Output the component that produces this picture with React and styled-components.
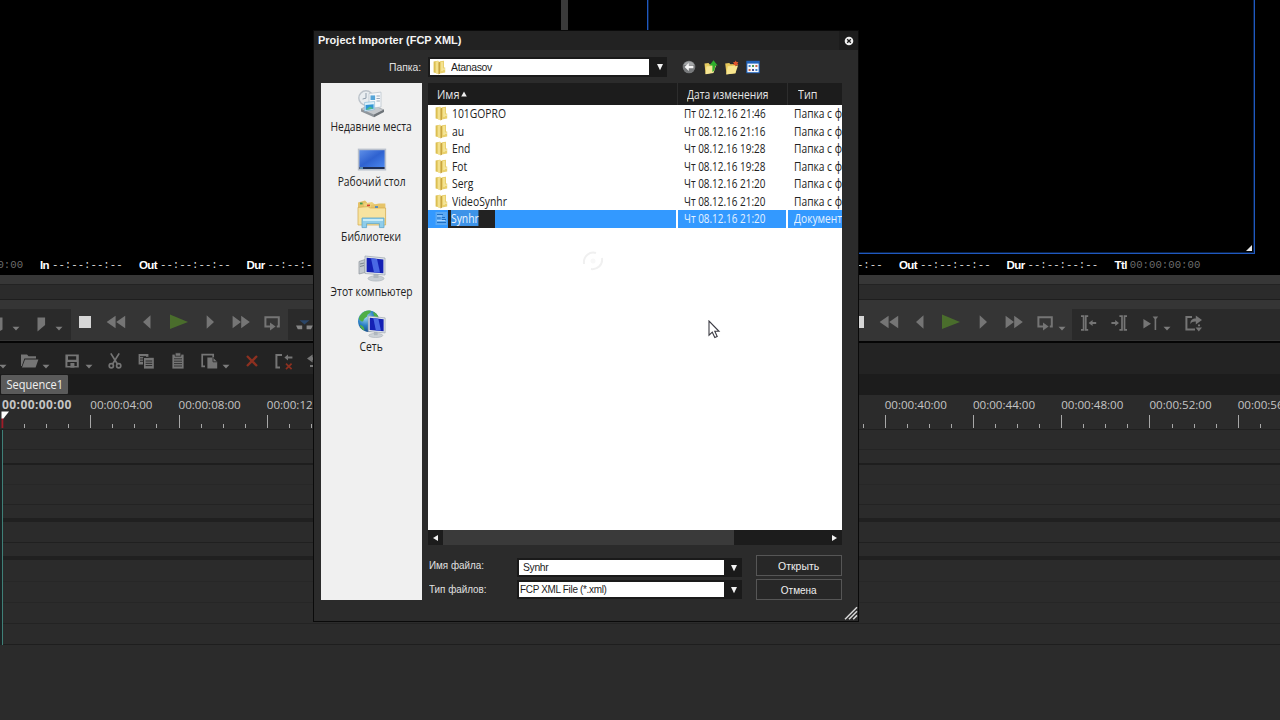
import React from "react";
import styled, { createGlobalStyle } from "styled-components";

const GlobalStyle = createGlobalStyle`
    * {
        box-sizing: border-box;
    }
    body {
        margin: 0;
        background: #2b2b2b;
        overflow: hidden;
    }
    svg {
        display: block;
        flex-shrink: 0;
    }
`;

const files = [
    { name: "101GOPRO", date: "Пт 02.12.16 21:46" },
    { name: "au", date: "Чт 08.12.16 21:16" },
    { name: "End", date: "Чт 08.12.16 19:28" },
    { name: "Fot", date: "Чт 08.12.16 19:28" },
    { name: "Serg", date: "Чт 08.12.16 21:20" },
    { name: "VideoSynhr", date: "Чт 08.12.16 21:20" },
];

// height of each track and thickness / colour of the line below it
const tracks = [
    [19, 1, "#242424"],
    [13, 2, "#1e1e1e"],
    [19, 1, "#272727"],
    [19, 1, "#232323"],
    [13, 4, "#202020"],
    [20, 1, "#202020"],
    [13, 4, "#202020"],
    [21, 1, "#272727"],
    [20, 1, "#262626"],
    [20, 1, "#232323"],
    [20, 1, "#1e1e1e"],
];

const marks = Array.from({ length: 15 }, (_, i) => {
    const s = String(i * 4).padStart(2, "0");
    return `00:00:${s}:00`;
});

/* ---------- icons ---------- */

const Caret = () => (
    <svg width="8" height="20" viewBox="0 0 8 20">
        <path d="M0.5 13.8h7L4 17.6z" fill="#7c7c7c" />
    </svg>
);

const Glyph = ({ children, width = 20 }) => (
    <svg width={width} height="20" viewBox={`0 0 ${width} 20`} fill="#757575">
        {children}
    </svg>
);

const Stop = () => (
    <Glyph>
        <path d="M4 4h12v12H4z" fill="#d6d6d6" />
    </Glyph>
);
const Rewind = () => (
    <Glyph>
        <path d="M9.6 3.8v12.4L.6 10zM19.2 3.8v12.4L10.2 10z" />
    </Glyph>
);
const Prev = () => (
    <Glyph>
        <path d="M13.5 3.3v13.4L6 10z" />
    </Glyph>
);
const Play = () => (
    <Glyph>
        <path d="M1 2.5v14.6L19 10z" fill="#4a6d2c" />
    </Glyph>
);
const Next = () => (
    <Glyph>
        <path d="M6.7 3.3v13.4L14 10z" />
    </Glyph>
);
const Forward = () => (
    <Glyph>
        <path d="M1.6 3.8v12.4L10 10zM10.2 3.8v12.4L18.8 10z" />
    </Glyph>
);
const Loop = () => (
    <Glyph>
        <path d="M8 14.4H3.4V5.2h13.4v9.2h-2" fill="none" stroke="#757575" strokeWidth="2" />
        <path d="M8 10.6v8l5.6-4z" />
    </Glyph>
);
const Marker = () => (
    <Glyph>
        <path d="M6.5 4.4h7.6v7.6l-7.6 6.4z" />
    </Glyph>
);
const Sync = () => (
    <Glyph>
        <path d="M5.5 7.2h10l-5 4.4z" fill="#2b4668" />
        <path d="M2 12.6h6.2v3.6H3.8zM12.6 12.6h6.2l-1.8 3.6h-4.4z" fill="#858585" />
    </Glyph>
);
const SetIn = () => (
    <Glyph>
        <path d="M2 3.2h2.6v13.6H2M9.2 3.2H6.8v13.6h2.4" fill="none" stroke="#757575" strokeWidth="1.7" />
        <path d="M9.6 10l4-3v2h3.6v2h-3.6v2z" />
    </Glyph>
);
const SetOut = () => (
    <Glyph>
        <path d="M10.4 3.2h2.6v13.6h-2.6M18 3.2h-2.5v13.6H18" fill="none" stroke="#757575" strokeWidth="1.7" />
        <path d="M10 10L6.2 7v2H2.4v2h3.8v2z" />
    </Glyph>
);
const NextEdit = () => (
    <Glyph>
        <path d="M2.4 6v9.6l7.6-4.8zM11.6 3.6h5.6L15.2 6v11h-1.6V6z" />
    </Glyph>
);
const Export = () => (
    <Glyph>
        <path d="M9 3.9H3.4v12.6H12" fill="none" stroke="#757575" strokeWidth="2" />
        <path d="M7.4 11c0-4 2-5.4 5.4-5.4V2.4L19 7l-6.2 4.4V8.6c-2.6-.2-4 .6-5.4 2.4zM12.6 14.5H19l-3.2 4zM15 11.4h2v1.8h-2z" />
    </Glyph>
);
const FolderOpen = () => (
    <Glyph>
        <path d="M1 3.4h6l1.6 1.8H16v2.2H4.4L1.8 15H1z" />
        <path d="M5 8.6h13.4l-2.8 8H2z" />
    </Glyph>
);
const Save = () => (
    <Glyph>
        <path fillRule="evenodd" d="M3.4 3.4h13.4v13.2H3.4zM6 5.2v3.6h8.2V5.2zM5.4 11v4h9.4v-4z" />
        <path d="M8.4 12h4v4.6h-4z" />
    </Glyph>
);
const Cut = () => (
    <Glyph>
        <g fill="none" stroke="#757575" strokeWidth="1.7">
            <path d="M5.8 2.4L12.4 13M14.2 2.4L7.6 13" />
            <circle cx="6.3" cy="14.8" r="2.1" />
            <circle cx="13.7" cy="14.8" r="2.1" />
        </g>
    </Glyph>
);
const Copy = () => (
    <Glyph>
        <path d="M2.6 3h9.8v3H8v7.4H2.6z" />
        <path d="M8 6.8h9.8v10.8H8z" />
        <path d="M4 5.6h6M4 8h3M4 10.3h3M9.6 10h6.6M9.6 12.3h6.6M9.6 14.6h6.6" stroke="#2a2a2a" />
        <path d="M7.5 17V6.3h5" stroke="#242424" fill="none" />
    </Glyph>
);
const Paste = () => (
    <Glyph>
        <path d="M4.4 3.6h11.2v14H4.4z" />
        <path d="M7.2 1.8h5.6v3.4H7.2z" stroke="#242424" strokeWidth=".8" />
        <path d="M6 7.8h8M6 10.2h8M6 12.6h8M6 15h8" stroke="#333" />
    </Glyph>
);
const PasteTo = () => (
    <Glyph>
        <path d="M6 15.4H3.2V3.6h11v2.8" fill="none" stroke="#757575" strokeWidth="1.7" />
        <path d="M8.4 6.6h5.4l4.4 4.2v6.8H8.4z" />
        <path d="M14 6.6v4.2h4" fill="none" stroke="#333" />
    </Glyph>
);
const Remove = () => (
    <Glyph>
        <path d="M5 5l10 10M15 5L5 15" stroke="#8c3020" strokeWidth="2.3" />
    </Glyph>
);
const RippleDelete = () => (
    <Glyph width="22">
        <path d="M10 4H4.4v12.4H8" fill="none" stroke="#757575" strokeWidth="2" />
        <path d="M12.4 6.4l3.6-3v2h4.4v2H16v2z" />
        <path d="M14 12.6l5.6 5.6M19.6 12.6L14 18.2" stroke="#8c3020" strokeWidth="1.7" />
    </Glyph>
);
const Undo = () => (
    <Glyph>
        <path d="M2 7.6l5.6-4v2.6h6V9h-6v2.6z" />
        <path d="M5 14h9v2H5z" />
    </Glyph>
);

const FolderIcon = () => (
    <svg width="13" height="15" viewBox="0 0 13 15">
        <path d="M.6 1.6L5 .8v12.6L.6 12.4z" fill="#dcbf52" />
        <path d="M2.6 1.4L6 .8v12.6l-2 .6-1.4-1z" fill="#f3e08c" />
        <path d="M5.4 2.4L7 1.4v12.4l-1.6.8z" fill="#c9a540" />
        <path d="M7 1.2l4-.4v6.6h1.2v5L7 13.6z" fill="#e9d06c" />
        <path d="M8 2h2v9H8z" fill="#f4e290" />
        <path d="M9.6 8.6H12v1H9.6z" fill="#f9f0c0" />
    </svg>
);

const XmlIcon = () => (
    <svg width="13" height="15" viewBox="0 0 13 15">
        <path d="M.5 1H12v13H.5z" fill="#5aa9f4" />
        <path d="M2 3.5h6M2 7h3.5M2 11.5h9M7 6.5h3M7 8.5h4" stroke="#1f6fc4" />
        <path d="M2 5h5M2 9.5h8" stroke="#a8d4ff" />
    </svg>
);

const RecentIcon = () => (
    <svg width="30" height="30" viewBox="0 0 30 30">
        <path d="M4 20l10-5 13 6-10 6.5z" fill="#c4c8cc" stroke="#92979c" strokeWidth=".6" />
        <path d="M4 20l13 5.5v2.8L4 22.4z" fill="#8f959b" />
        <path d="M17 25.5l10-5V23l-10 5.3z" fill="#6e7479" />
        <circle cx="9" cy="9" r="7.2" fill="#e9edf0" stroke="#bcc3ca" strokeWidth="1.4" />
        <path d="M9 4v5.2L5.6 10" fill="none" stroke="#8f9dab" />
        <path d="M12 4.5l12-1.4V18l-12 1.5z" fill="#f6f8fa" stroke="#b6c0c8" strokeWidth=".7" />
        <path d="M19.5 7h3.4M19.5 9.5h3.4M19.5 12h3.4" stroke="#98a9ba" />
        <path d="M13.5 6.4h4.6V11h-4.6z" fill="#56a5d8" />
        <path d="M7.6 13.5l10-1v8l-10 1.7z" fill="#dff1fb" stroke="#7fb3d3" strokeWidth=".6" />
        <path d="M8.6 16l8-.8v4.6l-8 1.3z" fill="#2f96d6" />
        <path d="M9 20.5l4-3 3.6 2L9 21z" fill="#51bb8a" />
    </svg>
);

const DesktopIcon = () => (
    <svg width="30" height="30" viewBox="0 0 30 30">
        <defs>
            <linearGradient id="desk" x1="0" y1="0" x2="1" y2="1">
                <stop offset="0" stopColor="#5e8fe8" />
                <stop offset=".5" stopColor="#2f62d0" />
                <stop offset="1" stopColor="#4a86ee" />
            </linearGradient>
        </defs>
        <path d="M.8 4.6h28.4v21.9H.8z" fill="#b9c0cc" />
        <path d="M2.4 6.2h25.2V23H2.4z" fill="url(#desk)" />
        <path d="M2.4 23h25.2v2H2.4z" fill="#1d2e55" />
        <path d="M3 23.3h3v1.4H3z" fill="#78b4d8" />
    </svg>
);

const LibraryIcon = () => (
    <svg width="32" height="30" viewBox="0 0 32 30">
        <path d="M2 3.4l7-1.8 2 2v22H2z" fill="#e4c268" />
        <path d="M8 4.4L16 3l3 2.4v20H8z" fill="#edd17c" />
        <path d="M15 6l8-1.6h6.4V24H15z" fill="#e6c46a" />
        <path d="M2 8.4l10-.8L14 9h15.6v17H2z" fill="#f7e3a0" stroke="#d3a94c" strokeWidth=".7" />
        <path d="M4 3.6h2.6v1.8H4z" fill="#3d9a50" />
        <path d="M11 5.6h3v1.6h-3z" fill="#d6402f" />
        <path d="M19 7.2h3v1.6h-3z" fill="#3a83cf" />
        <path d="M6 19h22v9.6h-4.6v-4H10.6v4H6z" fill="#8fcdea" stroke="#5ba5cc" strokeWidth=".8" />
        <path d="M7 20h20v2H7z" fill="#c8ecf8" />
    </svg>
);

const ScreenShape = ({ x, y, w, h }) => (
    <g>
        <path d={`M${x} ${y}l${w} 2v${h}l${-w} -1.5z`} fill="#dfe4e8" stroke="#9aa4ad" strokeWidth=".7" />
        <path d={`M${x + 1.6} ${y + 1.8}l${w - 3.2} 1.7v${h - 3.2}l${3.2 - w} -1.4z`} fill="#1420b4" />
        <path d={`M${x + w * 0.3} ${y + 2.2}l${w * 0.3} .8l${w * 0.15} ${h - 3.6}h${-w * 0.3}z`} fill="#4968e4" />
    </g>
);

const ComputerIcon = () => (
    <svg width="32" height="30" viewBox="0 0 32 30">
        <path d="M3 7.5l6-2v13L3 20z" fill="#c3c9ce" stroke="#8c949b" strokeWidth=".7" />
        <path d="M4 10l4-1M4 12.5l4-1" stroke="#7d868e" />
        <ellipse cx="20" cy="24.5" rx="8" ry="2.6" fill="#c8ced3" stroke="#a3abb2" strokeWidth=".6" />
        <path d="M17.5 18h5v6h-5z" fill="#b0b8bf" />
        <ScreenShape x={9} y={2} w={20} h={17} />
    </svg>
);

const NetworkIcon = () => (
    <svg width="32" height="32" viewBox="0 0 32 32">
        <defs>
            <radialGradient id="globe" cx=".35" cy=".3" r=".8">
                <stop offset="0" stopColor="#a5dcf4" />
                <stop offset=".5" stopColor="#2b7fc4" />
                <stop offset="1" stopColor="#12427e" />
            </radialGradient>
        </defs>
        <circle cx="12.5" cy="13" r="11.4" fill="url(#globe)" />
        <path d="M4 6c3-4 8-5 11-4-1 3-4 3-4 5s-3 2-4 5-4 0-5-1c0-2 1-4 2-5zM13 13c3-2 7 0 8 3l-4 6c-3-1-5-5-4-9zM3 17c3 0 5 3 5 6-3-1-4-3-5-6zM17 3c3 1 5 3 6 6l-4 1z" fill="#4fae45" />
        <ellipse cx="20" cy="28.2" rx="7.5" ry="2.2" fill="#cdd2d6" stroke="#a3abb2" strokeWidth=".6" />
        <path d="M18 23h4v5h-4z" fill="#b0b8bf" />
        <ScreenShape x={12} y={7.5} w={18} h={16} />
    </svg>
);

/* ---------- editor ---------- */

const Counter = ({ label, width, children, muted }) => (
    <CounterBox $width={width}>
        {label && <b>{label}</b>}
        <Digits $muted={muted}>{children}</Digits>
    </CounterBox>
);

const empty = "--:--:--:--";

function Editor() {
    return (
        <Screen>
            <Monitors>
                <LeftMonitor />
                <Splitter />
                <MonitorFrame>
                    <svg width="6" height="6" viewBox="0 0 6 6">
                        <path d="M6 0v6H0z" fill="#e8e8e8" />
                    </svg>
                </MonitorFrame>
            </Monitors>
            <Counters>
                <CounterHalf $pad={-47.5}>
                    <Counter width={87.5} muted>
                        00:00:00:00
                    </Counter>
                    <Counter label="In" width={99}>{empty}</Counter>
                    <Counter label="Out" width={107.5}>{empty}</Counter>
                    <Counter label="Dur" width={108}>{empty}</Counter>
                </CounterHalf>
                <CounterHalf $pad={160}>
                    <Counter label="In" width={99}>{empty}</Counter>
                    <Counter label="Out" width={107.5}>{empty}</Counter>
                    <Counter label="Dur" width={108}>{empty}</Counter>
                    <Counter label="Ttl" width={90} muted>
                        00:00:00:00
                    </Counter>
                </CounterHalf>
            </Counters>
            <Shuttle />
            <SeekBar />
            <Transport>
                <TransportHalf>
                    <InsetGroup $width={71}>
                        <Glyph width={3}>
                            <path d="M0 4.4h2.5v12L0 18z" />
                        </Glyph>
                        <Space $w={8.5} />
                        <Caret />
                        <Space $w={11.5} />
                        <Marker />
                        <Space $w={3.5} />
                        <Caret />
                    </InsetGroup>
                    <PlayGroup $pad={3.7} $width={217}>
                        <Stop />
                        <Rewind />
                        <Prev />
                        <Play />
                        <Next />
                        <Forward />
                        <Loop />
                    </PlayGroup>
                    <InsetGroup $width={352}>
                        <Space $w={5.5} />
                        <Sync />
                    </InsetGroup>
                </TransportHalf>
                <TransportHalf>
                    <PlayGroup $pad={207.6} $width={432}>
                        <Stop />
                        <Rewind />
                        <Prev />
                        <Play />
                        <Next />
                        <Forward />
                        <Loop />
                        <CaretNear>
                            <Caret />
                        </CaretNear>
                    </PlayGroup>
                    <InsetGroup $width={208}>
                        <Space $w={6.5} />
                        <SetIn />
                        <Space $w={10} />
                        <SetOut />
                        <Space $w={12} />
                        <NextEdit />
                        <Space $w={2.5} />
                        <Caret />
                        <Space $w={12} />
                        <Export />
                    </InsetGroup>
                </TransportHalf>
            </Transport>
            <Toolbar>
                <Space $w={-1} />
                <Caret />
                <Space $w={12.5} />
                <FolderOpen />
                <Space $w={2.5} />
                <Caret />
                <Space $w={12} />
                <Save />
                <Space $w={3} />
                <Caret />
                <Space $w={12} />
                <Cut />
                <Space $w={11.3} />
                <Copy />
                <Space $w={11.3} />
                <Paste />
                <Space $w={11.3} />
                <PasteTo />
                <Space $w={3.5} />
                <Caret />
                <Space $w={12} />
                <Remove />
                <Space $w={10} />
                <RippleDelete />
                <Space $w={11} />
                <Undo />
            </Toolbar>
            <TabStrip>
                <SequenceTab>
                    <Narrow $scale={0.92} $from="center">Sequence1</Narrow>
                </SequenceTab>
            </TabStrip>
            <Ruler>
                {marks.map((m, i) => (
                    <Mark key={m} $current={i === 0}>
                        <span>{m}</span>
                        <Ticks>
                            <i />
                            <i />
                            <i />
                            <i />
                        </Ticks>
                    </Mark>
                ))}
                <Playhead width="9" height="17" viewBox="0 0 9 17">
                    <path d="M.5 7h1.8v10H.5z" fill="#a01c28" />
                    <path d="M.5.5H8L2.5 7.5h-2z" fill="#fff" />
                </Playhead>
            </Ruler>
            <Tracks>
                {tracks.map(([height, line, color], i) => (
                    <Track key={i} $height={height} $line={line} $color={color} />
                ))}
            </Tracks>
        </Screen>
    );
}

/* ---------- dialog ---------- */

const Arrow = ({ d }) => (
    <svg width="8" height="8" viewBox="0 0 8 8">
        <path d={d} fill="#f2f2f2" />
    </svg>
);
const down = "M1 1h6L4 7.2z";

const places = [
    ["Недавние места", RecentIcon],
    ["Рабочий стол", DesktopIcon],
    ["Библиотеки", LibraryIcon],
    ["Этот компьютер", ComputerIcon],
    ["Сеть", NetworkIcon],
];

function ImportDialog() {
    return (
        <Dialog>
            <TitleBar>
                <Title>Project Importer (FCP XML)</Title>
                <CloseBox>
                    <svg width="10" height="10" viewBox="0 0 10 10">
                        <circle cx="5" cy="5" r="4.3" fill="#f0f0f0" />
                        <path d="M3.2 3.2l3.6 3.6M6.8 3.2L3.2 6.8" stroke="#1c1c1c" strokeWidth="1.3" />
                    </svg>
                </CloseBox>
            </TitleBar>
            <LookIn>
                <LookInLabel>
                    <Narrow $scale={0.94} $from="right">Папка:</Narrow>
                </LookInLabel>
                <Combo $width={239} $height={20}>
                    <Field $pad={3}>
                        <FolderIcon />
                        <Space $w={5} />
                        <Shell $scale={0.95}>Atanasov</Shell>
                    </Field>
                    <Drop $w={18} $shift={3}>
                        <Arrow d={down} />
                    </Drop>
                </Combo>
                <NavIcons>
                    <svg width="14" height="14" viewBox="0 0 14 14">
                        <circle cx="7" cy="7" r="6.3" fill="#77797b" />
                        <path d="M1.6 5a6 6 0 0 1 10.8 0z" fill="#a3a5a7" />
                        <path d="M2.6 7l4.2-4v2.8h4.6v2.4H6.8V11z" fill="#f6f6f6" />
                    </svg>
                    <svg width="15" height="15" viewBox="0 0 15 15">
                        <path d="M1.5 3.5l4-.6 1.2 1.5 4-.4-1 8.5L2.5 14z" fill="#e6cb62" />
                        <path d="M3.5 6.5l9.5-1-2.5 7.5-8 1.2z" fill="#f6e694" />
                        <path d="M9.4 12V5.5H6.4L10.5.3l4.1 5.2H12c.2 3-.4 5.3-2.6 6.5z" fill="#2fae2c" />
                    </svg>
                    <svg width="15" height="15" viewBox="0 0 15 15">
                        <path d="M1.2 3.5l4-.5 1.3 1.3 5-.3v9.2l-9 1z" fill="#e6c75a" />
                        <path d="M3.8 6.2L14 5.4l-2.6 7.8-9.2 1.2z" fill="#f8e58e" />
                        <path d="M11.7.5l.9 1.6 1.8-.2-1 1.6 1 1.6-1.8-.1-.9 1.6-.9-1.6-1.8.1 1-1.6-1-1.6 1.8.2z" fill="#e0552b" />
                    </svg>
                    <svg width="14" height="14" viewBox="0 0 14 14">
                        <path d="M.3.8h13.4v12.4H.3z" fill="#1f63bd" />
                        <path d="M1.4 3.6h11.2v8.6H1.4z" fill="#f4f8fc" />
                        <path d="M2.6 5h2v2h-2zM9.4 9h2v2h-2z" fill="#3f7fc8" />
                        <path d="M6 5h2v2H6z" fill="#4a9a58" />
                        <path d="M9.4 5h2v2h-2zM2.6 9h2v2h-2z" fill="#c6664a" />
                        <path d="M6 9h2v2H6z" fill="#444c88" />
                    </svg>
                </NavIcons>
            </LookIn>
            <Body>
                <Places>
                    {places.map(([label, Icon]) => (
                        <Place key={label}>
                            <Icon />
                            <Narrow $scale={0.88} $from="center">{label}</Narrow>
                        </Place>
                    ))}
                </Places>
                <Main>
                    <ListHeader>
                        <HeadCell $pad={8.5}>
                            <Narrow $scale={0.94}>Имя</Narrow>
                            <svg width="6" height="6" viewBox="0 0 6 6">
                                <path d="M3 .4L5.8 5.6H.2z" fill="#eee" />
                            </svg>
                        </HeadCell>
                        <HeadCell $pad={9}>
                            <Narrow $scale={0.875}>Дата изменения</Narrow>
                        </HeadCell>
                        <HeadCell $pad={9.5}>
                            <Narrow $scale={0.92}>Тип</Narrow>
                        </HeadCell>
                    </ListHeader>
                    <List>
                        {files.map((f) => (
                            <Row key={f.name}>
                                <NameCell>
                                    <FolderIcon />
                                    <FileName $scale={0.885}>{f.name}</FileName>
                                </NameCell>
                                <Cell>
                                    <Narrow $scale={0.85}>{f.date}</Narrow>
                                </Cell>
                                <Cell>
                                    <Narrow $scale={0.875}>Папка с файлами</Narrow>
                                </Cell>
                            </Row>
                        ))}
                        <Row $selected>
                            <NameCell>
                                <XmlIcon />
                                <RenameBox>
                                    <SelectedText $scale={0.885}>Synhr</SelectedText>
                                </RenameBox>
                            </NameCell>
                            <Cell>
                                <Narrow $scale={0.85}>Чт 08.12.16 21:20</Narrow>
                            </Cell>
                            <Cell>
                                <Narrow $scale={0.875}>Документ XML</Narrow>
                            </Cell>
                        </Row>
                    </List>
                    <ScrollBar>
                        <Drop $w={15}>
                            <Arrow d="M6 1v6L1 4z" />
                        </Drop>
                        <Thumb />
                        <Drop $w={16}>
                            <Arrow d="M2 1v6l5-3z" />
                        </Drop>
                    </ScrollBar>
                    <Footer>
                        <FieldLabel>
                            <Narrow $scale={0.895}>Имя файла:</Narrow>
                        </FieldLabel>
                        <FooterCombo $width={225} $height={19} $top={3}>
                            <Field $pad={4}>
                                <Shell $scale={0.94}>Synhr</Shell>
                            </Field>
                            <Drop $w={18} $shift={2}>
                                <Arrow d={down} />
                            </Drop>
                        </FooterCombo>
                        <Button>
                            <Narrow $scale={0.95} $from="center">Открыть</Narrow>
                        </Button>
                        <FieldLabel>
                            <Narrow $scale={0.895}>Тип файлов:</Narrow>
                        </FieldLabel>
                        <FooterCombo $width={225} $height={19} $top={1}>
                            <Field $pad={1}>
                                <Shell $scale={0.905}>FCP XML File (*.xml)</Shell>
                            </Field>
                            <Drop $w={18} $shift={2}>
                                <Arrow d={down} />
                            </Drop>
                        </FooterCombo>
                        <Button>
                            <Narrow $scale={0.91} $from="center">Отмена</Narrow>
                        </Button>
                    </Footer>
                </Main>
            </Body>
            <Grip width="14" height="14" viewBox="0 0 14 14">
                <path d="M1 13.2L13 1.2M5 13.2l8-8M9.2 13.2L13 9.4" stroke="#d8d8d8" strokeWidth="1.5" />
            </Grip>
        </Dialog>
    );
}

function App() {
    return (
        <>
            <GlobalStyle />
            <Editor />
            <ImportDialog />
            <Busy width="22" height="22" viewBox="0 0 22 22">
                <path d="M2 14C1 6 8 1 14 3M20 8c1 7-5 12-11 11" fill="none" stroke="#f0f0f0" strokeWidth="2" />
                <circle cx="11" cy="11" r="2.5" fill="#f8f8f8" />
            </Busy>
            <Pointer width="13" height="19" viewBox="0 0 13 19">
                <path d="M1 1v14.2l3.3-3 2.5 5.3 2.4-1.1-2.4-5.1H11z" fill="#fff" stroke="#3c3c44" strokeWidth="1.1" />
            </Pointer>
        </>
    );
}

export default App;

const ui = `"Open Sans", "Noto Sans", sans-serif`;
const shell = `"Liberation Sans", Arial, sans-serif`;

// system fonts of the dialog are narrower than the fallbacks
const Narrow = styled.span`
    display: inline-block;
    white-space: nowrap;
    transform: scaleX(${(props) => props.$scale});
    transform-origin: ${(props) => props.$from || "left"};
`;

const Screen = styled.div`
    width: 1280px;
    height: 720px;
    overflow: hidden;
    display: flex;
    flex-direction: column;
    background: #2b2b2b;
`;

const Space = styled.div`
    flex-shrink: 0;
    width: ${(props) => Math.max(props.$w, 0)}px;
    margin-left: ${(props) => Math.min(props.$w, 0)}px;
`;

const Monitors = styled.div`
    display: flex;
    height: 254px;
    flex-shrink: 0;
    background: #000;
`;

const LeftMonitor = styled.div`
    width: 561px;
`;

const Splitter = styled.div`
    width: 7px;
    background: #3a3a3a;
`;

const MonitorFrame = styled.div`
    width: 608px;
    margin-left: 79px;
    border: 1px solid #1f58c0;
    border-top: none;
    box-shadow: inset 0 -1px #0a2145, inset 1px 0 #0a2145, inset -1px 0 #0a2145;
    display: flex;
    align-items: flex-end;
    justify-content: flex-end;
    padding: 2px;
`;

const Counters = styled.div`
    display: flex;
    height: 21px;
    flex-shrink: 0;
    background: #000;
`;

const CounterHalf = styled.div`
    width: 640px;
    display: flex;
    align-items: center;
    overflow: hidden;
    & > :first-child {
        margin-left: ${(props) => props.$pad}px;
    }
`;

const CounterBox = styled.div`
    width: ${(props) => props.$width}px;
    flex-shrink: 0;
    display: flex;
    align-items: center;
    gap: 3px;
    white-space: nowrap;
    b {
        font: bold 11.5px ${shell};
        letter-spacing: -0.6px;
        color: #fff;
    }
`;

const Digits = styled.span`
    font: 10.7px "Liberation Mono", monospace;
    color: ${(props) => (props.$muted ? "#6c6c6c" : "#dcdcdc")};
`;

const Shuttle = styled.div`
    height: 10px;
    flex-shrink: 0;
    background: #373737;
    border-bottom: 1px solid #232323;
`;

const SeekBar = styled.div`
    height: 15px;
    flex-shrink: 0;
    background: #2b2b2b;
    border-bottom: 1px solid #1e1e1e;
`;

const Transport = styled.div`
    height: 43px;
    flex-shrink: 0;
    display: flex;
    background: #353535;
    border-bottom: 2px solid #050505;
`;

const TransportHalf = styled.div`
    width: 640px;
    display: flex;
    padding-top: 9px;
`;

const InsetGroup = styled.div`
    width: ${(props) => props.$width}px;
    height: 31px;
    display: flex;
    padding-top: 4px;
    background: #2a2a2a;
`;

const PlayGroup = styled.div`
    width: ${(props) => props.$width}px;
    height: 31px;
    display: flex;
    gap: 11.3px;
    padding: 3px 0 0 ${(props) => props.$pad}px;
`;

const CaretNear = styled.div`
    margin: 1px 0 0 -8.5px;
`;

const Toolbar = styled.div`
    height: 31px;
    flex-shrink: 0;
    display: flex;
    padding-top: 8px;
    background: #232323;
`;

const TabStrip = styled.div`
    height: 21px;
    flex-shrink: 0;
    padding: 1px 0 0 1px;
    background: #1c1c1c;
`;

const SequenceTab = styled.div`
    width: 67px;
    height: 19px;
    border-radius: 1px;
    background: #5a5a5a;
    color: #f0f0f0;
    font: 12px/20px ${ui};
    text-align: center;
`;

const Ruler = styled.div`
    position: relative;
    height: 35px;
    flex-shrink: 0;
    display: flex;
    padding-left: 2px;
    border-bottom: 1px solid #202020;
`;

const Mark = styled.div`
    width: 88.27px;
    flex-shrink: 0;
    height: 33px;
    display: flex;
    flex-direction: column;
    justify-content: space-between;
    span {
        font: ${(props) => (props.$current ? "bold 12px" : "11.6px")}/20px ${ui};
        letter-spacing: ${(props) => (props.$current ? 0.42 : 0)}px;
        color: #c4c4c4;
        white-space: nowrap;
    }
`;

const Ticks = styled.div`
    height: 13px;
    display: flex;
    align-items: flex-end;
    i {
        width: 25%;
        height: 4px;
        border-left: 1px solid #a8a8a8;
    }
    i:first-child {
        height: 13px;
    }
`;

const Playhead = styled.svg`
    position: absolute;
    left: 1px;
    top: 16px;
`;

const Tracks = styled.div`
    flex-shrink: 0;
    border-left: 1px solid #3f8078;
    margin-left: 2px;
    box-shadow: -2px 0 #1b2223;
`;

const Track = styled.div`
    height: ${(props) => props.$height + props.$line}px;
    border-bottom: ${(props) => props.$line}px solid ${(props) => props.$color};
`;

const Dialog = styled.div`
    position: absolute;
    left: 313px;
    top: 30px;
    width: 546px;
    height: 592px;
    border: 1px solid #0a0a0a;
    background: #2b2b2b;
    overflow: hidden;
    display: flex;
    flex-direction: column;
`;

const TitleBar = styled.div`
    height: 19px;
    flex-shrink: 0;
    display: flex;
    justify-content: space-between;
    background: #222;
`;

const Title = styled.div`
    padding-left: 4px;
    font: bold 11px/18px ${shell};
    color: #f4f4f4;
    white-space: nowrap;
`;

const CloseBox = styled.div`
    width: 19px;
    display: flex;
    align-items: center;
    justify-content: center;
    background: #1c1c1c;
`;

const LookIn = styled.div`
    height: 33px;
    flex-shrink: 0;
    display: flex;
    padding-top: 7px;
`;

const LookInLabel = styled.div`
    width: 114px;
    padding-right: 7px;
    text-align: right;
    font: 11px/20px ${shell};
    color: #e0e0e0;
`;

const Combo = styled.div`
    width: ${(props) => props.$width}px;
    height: ${(props) => props.$height}px;
    padding: 2px 0 2px 2px;
    display: flex;
    background: #1a1a1a;
`;

const FooterCombo = styled(Combo)`
    margin-top: ${(props) => props.$top}px;
`;

const Field = styled.div`
    flex: 1;
    display: flex;
    align-items: center;
    padding-left: ${(props) => props.$pad}px;
    overflow: hidden;
    background: #fff;
    color: #1c1c1c;
`;

const Shell = styled(Narrow)`
    font: 11px/15px ${shell};
    letter-spacing: -0.35px;
`;

const Drop = styled.div`
    width: ${(props) => props.$w}px;
    flex-shrink: 0;
    display: flex;
    align-items: center;
    justify-content: center;
    padding-left: ${(props) => props.$shift || 0}px;
`;

const NavIcons = styled.div`
    display: flex;
    align-items: center;
    gap: 6.5px;
    height: 20px;
    padding-left: 15px;
`;

const Body = styled.div`
    display: flex;
    padding: 0 16px 0 7px;
`;

const Places = styled.div`
    width: 101px;
    height: 517px;
    flex-shrink: 0;
    margin-right: 6px;
    padding-top: 6px;
    background: #f0f0f0;
`;

const Place = styled.div`
    height: 55px;
    display: flex;
    flex-direction: column;
    align-items: center;
    font: 11.7px/14px ${ui};
    color: #222;
    svg {
        height: 30px;
    }
`;

const Main = styled.div`
    width: 414px;
    flex-shrink: 0;
`;

const ListHeader = styled.div`
    height: 22px;
    display: grid;
    grid-template-columns: 250px 110px 54px;
    background: #1c1c1c;
`;

const HeadCell = styled.div`
    display: flex;
    align-items: center;
    gap: 1px;
    padding-left: ${(props) => props.$pad}px;
    border-right: 1px solid #2d2d2d;
    font: 11.7px ${ui};
    color: #e6e6e6;
    &:last-child {
        border-right: none;
    }
`;

const List = styled.div`
    height: 425px;
    background: #fff;
`;

const Row = styled.div`
    height: 17.5px;
    display: grid;
    grid-template-columns: 248px 108px 54px;
    column-gap: 2px;
    font: 11.7px/17px ${ui};
    color: ${(props) => (props.$selected ? "#e4f1ff" : "#222")};
    & > * {
        height: 17.5px;
        background: ${(props) => (props.$selected ? "#3399ff" : "transparent")};
    }
`;

const NameCell = styled.div`
    display: flex;
    align-items: center;
    padding-left: 7px;
`;

const FileName = styled(Narrow)`
    margin-left: 3.5px;
`;

const Cell = styled.div`
    padding-left: 6px;
    overflow: hidden;
    white-space: nowrap;
`;

const RenameBox = styled.div`
    width: 47px;
    height: 17.5px;
    padding-left: 3px;
    background: #222;
`;

const SelectedText = styled(Narrow)`
    height: 16px;
    line-height: 16px;
    background: #3d93e8;
    color: #eaf4ff;
`;

const ScrollBar = styled.div`
    height: 15px;
    display: flex;
    background: #1c1c1c;
`;

const Thumb = styled.div`
    width: 291px;
    margin-right: auto;
    background: #3a3a3a;
`;

const Footer = styled.div`
    display: grid;
    grid-template-columns: 89px 225px 100px;
    row-gap: 2px;
    margin-top: 10px;
`;

const FieldLabel = styled.div`
    padding-left: 1px;
    font: 11px/20px ${shell};
    color: #e0e0e0;
`;

const Button = styled.button`
    height: 21px;
    width: 86px;
    padding: 0;
    justify-self: end;
    border: 1px solid #565656;
    background: #272727;
    font: 11px ${shell};
    color: #eee;
`;

const Grip = styled.svg`
    position: absolute;
    right: 0;
    bottom: 1px;
`;

const Busy = styled.svg`
    position: absolute;
    left: 582px;
    top: 250px;
`;

const Pointer = styled.svg`
    position: absolute;
    left: 708px;
    top: 320px;
`;
